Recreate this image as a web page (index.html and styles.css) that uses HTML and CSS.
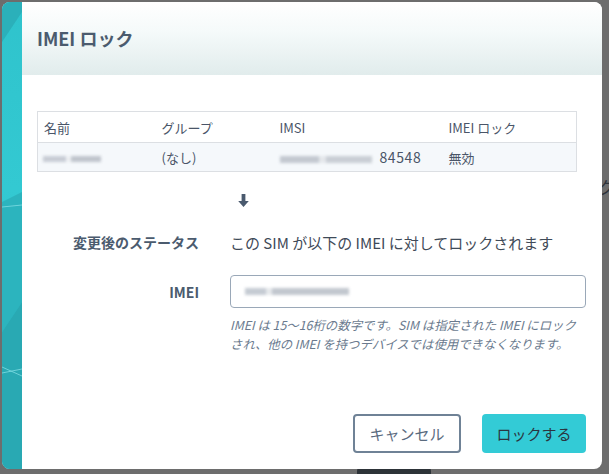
FILE: index.html
```html
<!DOCTYPE html>
<html lang="ja">
<head>
<meta charset="utf-8">
<link rel="stylesheet" href="styles.css">
</head>
<body>
<div class="backdrop">
  <span class="bg-glyph">ク</span>
  <span class="bg-button"></span>
  <div class="modal">
    <div class="stripe">
      <svg width="20" height="467" viewBox="0 0 20 467" preserveAspectRatio="none">
        <polygon points="0,0 20,0 20,10 0,40" fill="#2bb0ba"/>
        <polygon points="0,200 20,190 20,300 0,330" fill="#2cb4be"/>
        <polygon points="0,330 20,300 20,467 0,467" fill="#29a9b3"/>
        <line x1="0" y1="205" x2="20" y2="203" stroke="#7fdde3" stroke-width="0.8"/>
        <line x1="0" y1="371" x2="20" y2="367" stroke="#7fdde3" stroke-width="0.8"/>
        <line x1="0" y1="365" x2="20" y2="374" stroke="#7fdde3" stroke-width="0.8"/>
      </svg>
    </div>
    <div class="main">
      <div class="header"><h1>IMEI ロック</h1></div>
      <div class="body">
        <table class="sims">
          <thead>
            <tr><th class="c1">名前</th><th class="c2">グループ</th><th class="c3">IMSI</th><th>IMEI ロック</th></tr>
          </thead>
          <tbody>
            <tr>
              <td><span class="blur b-name"></span></td>
              <td>(なし)</td>
              <td><span class="blur b-imsi"></span><span class="imsi-end">84548</span></td>
              <td>無効</td>
            </tr>
          </tbody>
        </table>
        <div class="arrow">
          <svg width="11" height="13" viewBox="0 0 11 13"><path d="M3.6 0h3.8v7h3.4L5.5 13 0.2 7h3.4z" fill="#4a5a6e"/></svg>
        </div>
        <div class="row status">
          <div class="label">変更後のステータス</div>
          <div class="value">この SIM が以下の IMEI に対してロックされます</div>
        </div>
        <div class="row imei">
          <div class="label">IMEI</div>
          <div class="field">
            <div class="input"><span class="blur b-imei"></span></div>
            <p class="help">IMEI は 15〜16桁の数字です。SIM は指定された IMEI にロックされ、他の IMEI を持つデバイスでは使用できなくなります。</p>
          </div>
        </div>
        <div class="actions">
          <button class="btn cancel">キャンセル</button>
          <button class="btn primary">ロックする</button>
        </div>
      </div>
    </div>
  </div>
</div>
</body>
</html>
```

FILE: styles.css
```css
* { box-sizing: border-box; }
html, body { margin: 0; padding: 0; }
body {
  width: 609px;
  height: 474px;
  overflow: hidden;
  background: #6d6d6d;
  font-family: "Noto Sans CJK JP", "Noto Sans", sans-serif;
  color: #4a5568;
}
.backdrop {
  position: relative;
  width: 609px;
  height: 474px;
  padding: 2px 0 0 2px;
  overflow: hidden;
}
.bg-glyph {
  position: absolute;
  left: 598px;
  top: 174px;
  font-size: 17px;
  color: #2d333a;
}
.bg-button {
  position: absolute;
  left: 357px;
  top: 466px;
  width: 74px;
  height: 14px;
  border-radius: 5px;
  background: #2d3338;
}
.modal {
  position: relative;
  width: 600px;
  height: 467px;
  display: flex;
  border-radius: 8px;
  overflow: hidden;
  background: #fff;
}
.stripe {
  width: 20px;
  flex: none;
  background: linear-gradient(180deg, #2fc3cc 0%, #33c9d2 40%, #2db8c2 100%);
}
.stripe svg { display: block; }
.main {
  flex: 1;
  display: flex;
  flex-direction: column;
}
.header {
  height: 73px;
  background: linear-gradient(180deg, #ffffff 0%, #f5fafa 40%, #e1ecec 100%);
  padding: 23px 15px 0;
}
.header h1 {
  margin: 0;
  font-size: 18px;
  font-weight: 700;
  color: #4b5b6e;
  line-height: 26px;
}
.body {
  flex: 1;
  padding: 36px 16px 16px 15px;
  display: flex;
  flex-direction: column;
}
.sims {
  width: 540px;
  border-collapse: collapse;
  border: 1px solid #dcdfe3;
  font-size: 13px;
  color: #4a5568;
}
.sims th {
  text-align: left;
  font-weight: 400;
  height: 31px;
  padding: 0 6px;
  border-bottom: 1px solid #dcdfe3;
}
.sims th.c1 { width: 118px; }
.sims th.c2 { width: 118px; }
.sims th.c3 { width: 169px; }
.sims td {
  height: 29px;
  padding: 0 6px;
  background: #f5f8fb;
  white-space: nowrap;
}
.sims td:first-child { padding-left: 5px; }
.blur {
  display: inline-block;
  vertical-align: middle;
  filter: blur(1.5px);
}
.b-name {
  width: 58px;
  height: 6px;
  background: linear-gradient(90deg, #c7ccd4 0 40%, #eef0f3 40% 48%, #bfc4cc 48% 100%);
}
.b-imsi {
  width: 92px;
  height: 7px;
  background: linear-gradient(90deg, #c3c8d0 0 42%, #e4e7eb 42% 50%, #c9ced5 50% 100%);
  margin-right: 8px;
}
.imsi-end { font-size: 14px; letter-spacing: 0.6px; }
.arrow {
  width: 540px;
  height: 57px;
  padding-top: 22px;
  padding-left: 201px;
}
.arrow svg { display: block; }
.row {
  display: flex;
}
.row .label {
  width: 162px;
  flex: none;
  text-align: right;
  font-weight: 700;
  font-size: 14px;
  color: #4b5b6e;
}
.row .value,
.row .field {
  margin-left: 31px;
}
.status {
  align-items: center;
  height: 26px;
}
.status .value {
  font-size: 15px;
  color: #3f4a58;
}
.imei {
  margin-top: 20px;
}
.imei .label {
  padding-top: 7px;
}
.field { flex: 1; }
.input {
  height: 33px;
  border: 1px solid #9aa8b8;
  border-radius: 4px;
  display: flex;
  align-items: center;
  padding-left: 14px;
}
.b-imei {
  width: 104px;
  height: 7px;
  background: linear-gradient(90deg, #c5cbd3 0 20%, #e6e9ec 20% 26%, #c2c7cf 26% 100%);
}
.help {
  margin: 8px 0 0;
  padding-right: 6px;
  font-size: 12.4px;
  font-style: italic;
  line-height: 19px;
  color: #6a7a8e;
}
.actions {
  margin-top: auto;
  display: flex;
  justify-content: flex-end;
  gap: 21px;
}
.btn {
  font-family: "Noto Sans CJK JP", "Noto Sans", sans-serif;
  font-size: 15px;
  height: 39px;
  border-radius: 4px;
  cursor: pointer;
}
.cancel {
  width: 108px;
  background: #fff;
  border: 2px solid #6f8296;
  color: #5b6b7f;
}
.primary {
  width: 104px;
  background: #33cbd6;
  border: none;
  color: #2b3540;
}
```
